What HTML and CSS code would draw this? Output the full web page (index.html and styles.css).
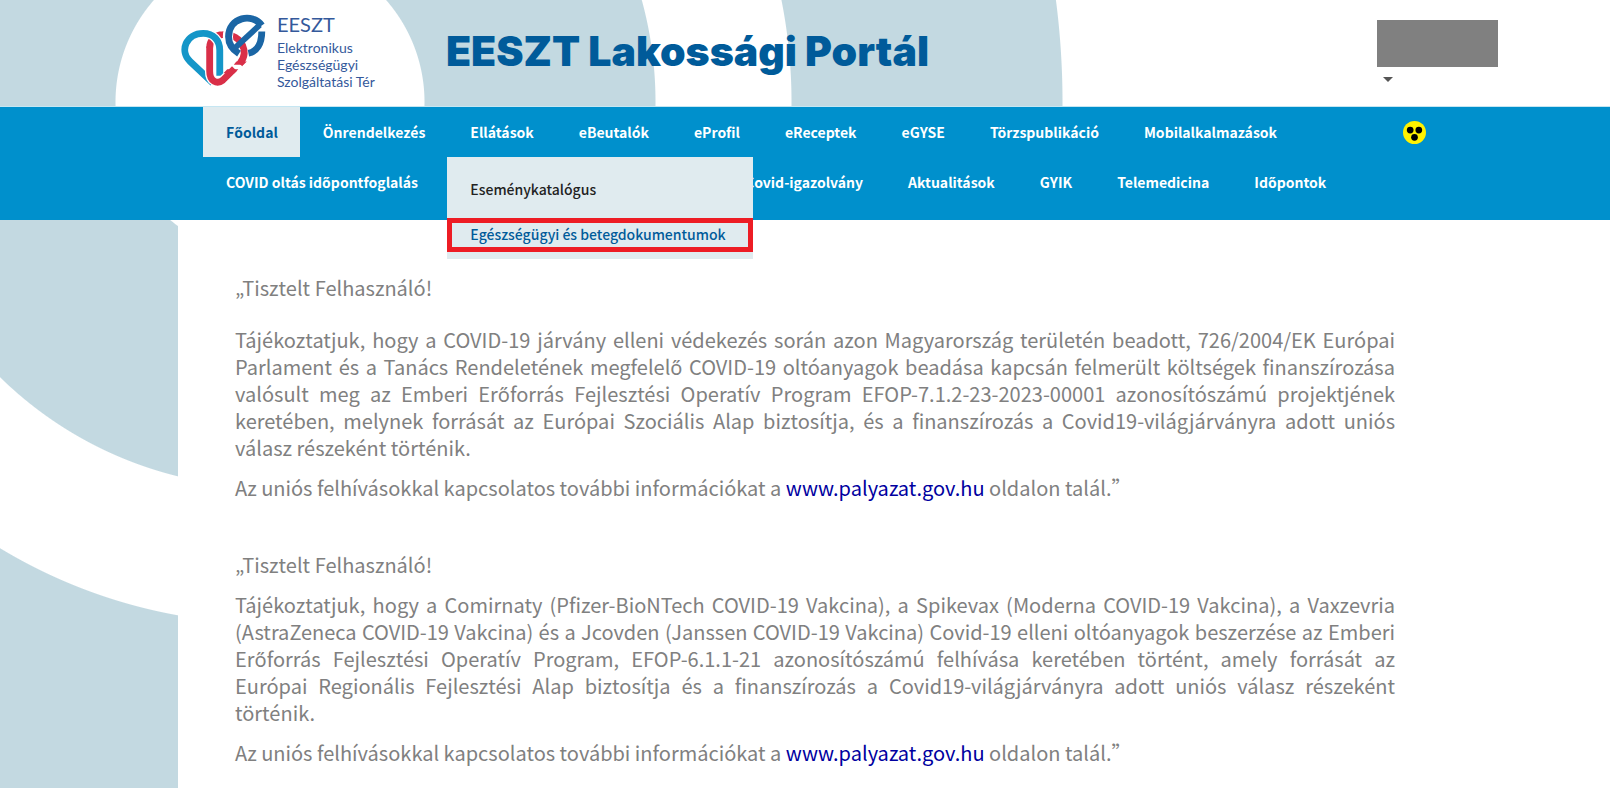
FILE: index.html
```
<!DOCTYPE html>
<html lang="hu">
<head>
    <meta charset="UTF-8">
    <meta name="viewport" content="width=device-width, initial-scale=1.0">
    <title>EESZT Lakossági Portál</title>
    <link rel="stylesheet" href="styles.css">
</head>
<body>
    <header class="header">
        <a class="logo" href="#">
            <svg class="logo-mark" viewBox="30 24 264 226" aria-hidden="true">
                <g fill="none" stroke-width="21">
                    <path d="M118 130C118 106 136 90 158 90C198 88 224 112 224 148C223 162 218 170 210 180" stroke="#d92f48"/>
                    <path d="M128 238L58 172C24 140 46 86 98 86C130 86 149 108 149 138V222" stroke="#fff" stroke-width="29"/>
                    <path d="M128 238L58 172C24 140 46 86 98 86C130 86 149 108 149 138V216" stroke="#1596c8"/>
                    <path d="M118 140V202C118 232 140 244 158 230L194 194" stroke="#fff" stroke-width="29"/>
                    <path d="M118 126V202C118 232 140 244 158 230L194 194" stroke="#d92f48"/>
                    <path d="M272 66C242 20 174 40 174 96C174 118 184 134 204 148" stroke="#fff" stroke-width="31"/>
                    <path d="M278 62C250 22 176 36 176 96C176 118 186 134 208 148" stroke="#1b66a5"/>
                    <path d="M190 136L272 60" stroke="#1b66a5" stroke-width="18"/>
                    <path d="M237 147C262 142 278 118 278 80" stroke="#1b66a5"/>
                </g>
                <path d="M200 172H232L222 182H192zM172 196H206L194 208H160z" fill="#d92f48"/>
            </svg>
            <span class="logo-text">
                <strong>EESZT</strong>
                <span>Elektronikus</span>
                <span>Egészségügyi</span>
                <span>Szolgáltatási Tér</span>
            </span>
        </a>
        <h1 class="title">EESZT Lakossági Portál</h1>
        <div class="user">
            <div class="user-name"></div>
            <button class="user-toggle" type="button" aria-label="Felhasználói menü"></button>
        </div>
    </header>

    <nav class="nav">
        <div class="nav-inner">
            <ul class="menu">
                <li><a class="active" href="#">Főoldal</a></li>
                <li><a href="#">Önrendelkezés</a></li>
                <li class="has-submenu">
                    <a href="#">Ellátások</a>
                    <ul class="submenu">
                        <li><a href="#">Eseménykatalógus</a></li>
                        <li><a class="highlight" href="#">Egészségügyi és betegdokumentumok</a></li>
                    </ul>
                </li>
                <li><a href="#">eBeutalók</a></li>
                <li><a href="#">eProfil</a></li>
                <li><a href="#">eReceptek</a></li>
                <li><a href="#">eGYSE</a></li>
                <li><a href="#">Törzspublikáció</a></li>
                <li><a href="#">Mobilalkalmazások</a></li>
            </ul>
            <ul class="menu">
                <li><a href="#">COVID oltás időpontfoglalás</a></li>
                <li class="after-submenu"><a href="#">Covid-igazolvány</a></li>
                <li><a href="#">Aktualitások</a></li>
                <li><a href="#">GYIK</a></li>
                <li><a href="#">Telemedicina</a></li>
                <li><a href="#">Időpontok</a></li>
            </ul>
            <button class="contrast" type="button" aria-label="Akadálymentes nézet">
                <svg viewBox="0 0 48 48" aria-hidden="true">
                    <circle cx="24" cy="24" r="24" fill="#fff200"/>
                    <circle cx="15" cy="19" r="7"/>
                    <circle cx="33" cy="19" r="7"/>
                    <circle cx="24" cy="34" r="7"/>
                </svg>
            </button>
        </div>
    </nav>

    <main class="content">
        <section class="notice">
            <p class="greeting">„Tisztelt Felhasználó!</p>
            <p>Tájékoztatjuk, hogy a COVID-19 járvány elleni védekezés során azon Magyarország területén beadott, 726/2004/EK Európai Parlament és a Tanács Rendeletének megfelelő COVID-19 oltóanyagok beadása kapcsán felmerült költségek finanszírozása valósult meg az Emberi Erőforrás Fejlesztési Operatív Program EFOP-7.1.2-23-2023-00001 azonosítószámú projektjének keretében, melynek forrását az Európai Szociális Alap biztosítja, és a finanszírozás a Covid19-világjárványra adott uniós válasz részeként történik.</p>
            <p>Az uniós felhívásokkal kapcsolatos további információkat a <a href="#">www.palyazat.gov.hu</a> oldalon talál.”</p>
        </section>
        <section class="notice">
            <p>„Tisztelt Felhasználó!</p>
            <p>Tájékoztatjuk, hogy a Comirnaty (Pfizer-BioNTech COVID-19 Vakcina), a Spikevax (Moderna COVID-19 Vakcina), a Vaxzevria (AstraZeneca COVID-19 Vakcina) és a Jcovden (Janssen COVID-19 Vakcina) Covid-19 elleni oltóanyagok beszerzése az Emberi Erőforrás Fejlesztési Operatív Program, EFOP-6.1.1-21 azonosítószámú felhívása keretében történt, amely forrását az <span class="keep">Európai Regionális</span> Fejlesztési Alap biztosítja és a finanszírozás a Covid19-világjárványra adott uniós válasz részeként történik.</p>
            <p>Az uniós felhívásokkal kapcsolatos további információkat a <a href="#">www.palyazat.gov.hu</a> oldalon talál.”</p>
        </section>
    </main>
</body>
</html>
```
FILE: styles.css
```
* {
    box-sizing: border-box;
    margin: 0;
    padding: 0;
}

body {
    display: flex;
    flex-direction: column;
    min-height: 100vh;
    font-family: "Noto Sans CJK SC", "Noto Sans", sans-serif;
    color: #808080;
    background: #fff radial-gradient(circle at 270px 102px,
        #fff 154px, #c3d9e1 155px,
        #c3d9e1 385px, #fff 386px,
        #fff 521px, #c3d9e1 522px,
        #c3d9e1 792px, #fff 793px) no-repeat;
}

a {
    text-decoration: none;
}

button {
    border: none;
    background: none;
    cursor: pointer;
}

/* Header */
.header {
    display: flex;
    align-items: flex-start;
    height: 107px;
    padding: 0 112px 0 181px;
    border-bottom: 1px solid #c5e6f2;
}

.logo {
    display: flex;
    gap: 10px;
    width: 265px;
    padding-top: 12px;
    color: #34599b;
}

.logo-mark {
    width: 86px;
    height: 76px;
}

.logo-text {
    display: flex;
    flex-direction: column;
    font-family: Lato, sans-serif;
    font-size: 14px;
    line-height: 17px;
    white-space: nowrap;
}

.logo-text strong {
    font-size: 20px;
    font-weight: 400;
    line-height: 24px;
    margin-bottom: 3px;
}

.title {
    font-family: Inter, "Liberation Sans", sans-serif;
    font-size: 41px;
    font-weight: 900;
    line-height: 48px;
    padding-top: 27px;
    color: #005b9a;
    white-space: nowrap;
}

.user {
    margin-left: auto;
    padding-top: 20px;
}

.user-name {
    width: 121px;
    height: 47px;
    background: #808080;
}

.user-toggle {
    display: block;
    margin: 10px 0 0 6px;
    border: 5px solid transparent;
    border-top-color: #555;
    border-bottom: none;
}

/* Navigation */
.nav {
    background: #0090cc;
}

.nav-inner {
    position: relative;
    max-width: 1254px;
    margin: 0 auto;
    padding: 0 25px 13px;
}

.menu {
    display: flex;
    list-style: none;
}

.menu a {
    display: block;
    padding: 0 22px 0 23px;
    font-size: 14px;
    font-weight: 700;
    line-height: 50px;
    white-space: nowrap;
    color: #fff;
}

.menu .active {
    color: #005b9a;
    background: #e0ebef;
}

/* leaves room for the open submenu */
.after-submenu {
    margin-left: 282px;
}

.has-submenu {
    position: relative;
}

.submenu {
    position: absolute;
    top: 50px;
    left: 0;
    z-index: 10;
    min-width: 306px;
    padding: 15px 0 7px;
    list-style: none;
    background: #e0ebef;
}

.submenu a {
    line-height: 34px;
    font-weight: 500;
    color: #222;
}

.submenu .highlight {
    margin-top: 12px;
    padding: 0 18px 2px;
    border: 5px solid #ed1c24;
    line-height: 22px;
    color: #005b9a;
}

.contrast {
    position: absolute;
    top: 14px;
    right: 6px;
    width: 23px;
    height: 23px;
}

.contrast svg {
    display: block;
}

/* Content */
.content {
    flex: 1;
    width: 100%;
    max-width: 1254px;
    margin: 0 auto;
    padding: 54px 37px 0 57px;
    background: #fff;
    font-size: 20px;
    line-height: 27px;
}

.notice {
    text-align: justify;
}

.notice + .notice {
    margin-top: 50px;
}

.notice p {
    margin-bottom: 13px;
}

.notice .greeting {
    margin-bottom: 25px;
}

.notice a {
    color: #0000a0;
}

.keep {
    white-space: nowrap;
}
```
